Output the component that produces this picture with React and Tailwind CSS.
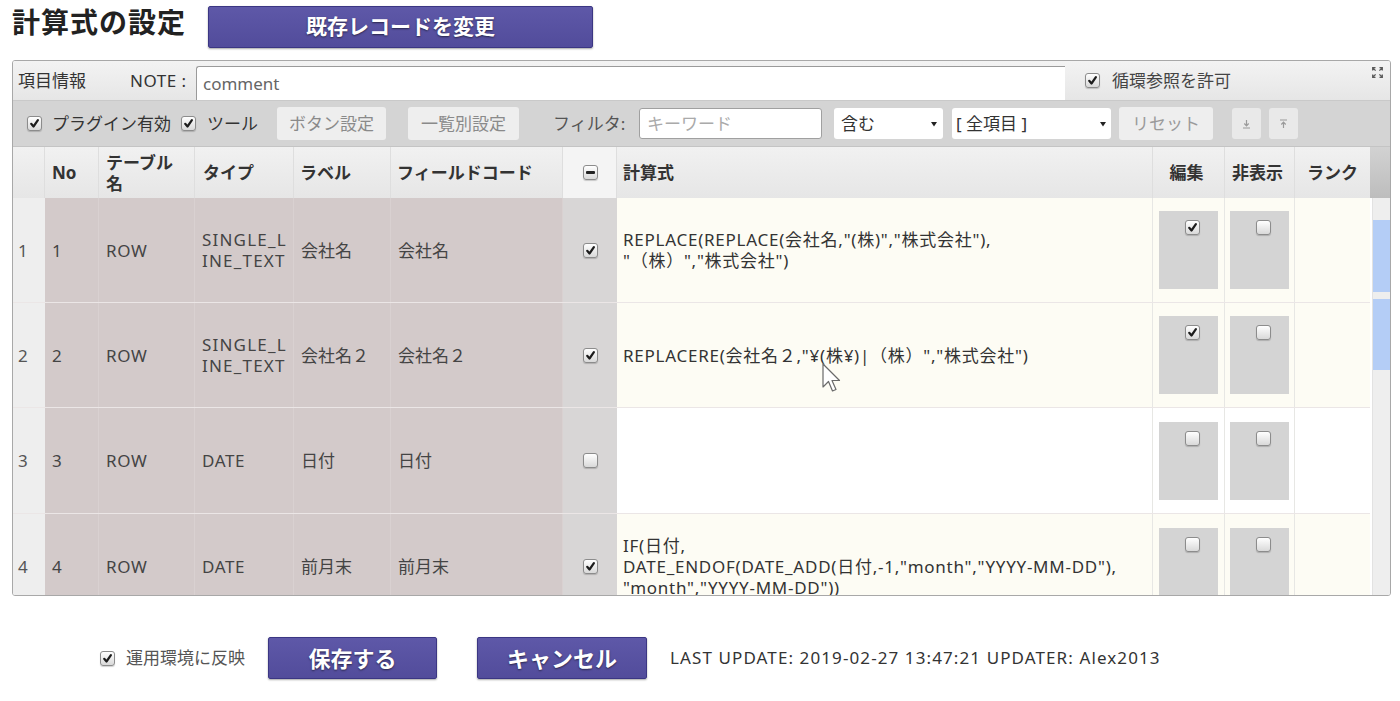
import React from "react";

const FONT = "font-['Noto_Sans','Noto_Sans_CJK_JP',sans-serif]";

function Box({ checked, minus }) {
  return (
    <span className="inline-flex w-[15px] h-[15px] shrink-0 items-center justify-center rounded-[3px] border border-[#8c8c8c] bg-linear-to-b from-white to-[#d9d9d9] shadow-[0_1px_1px_rgba(0,0,0,0.18)]">
      {checked && (
        <svg width="11" height="11" viewBox="0 0 11 11">
          <path d="M2.2 5.8 L4.5 8.5 L8.9 2.2" fill="none" stroke="#1c1c1c" strokeWidth="2.2" strokeLinecap="round" strokeLinejoin="round" />
        </svg>
      )}
      {minus && <span className="block w-[9px] h-[3px] rounded-[1px] bg-[#222]" />}
    </span>
  );
}

function PurpleButton({ children, className }) {
  return (
    <div
      className={
        "flex items-center justify-center h-[42px] rounded-[2px] border border-[#3b3683] bg-linear-to-b from-[#5e58a8] to-[#524c9b] text-white font-bold [text-shadow:0_1px_2px_rgba(0,0,0,0.55)] shadow-[0_1px_2px_rgba(0,0,0,0.35)] " +
        className
      }
    >
      {children}
    </div>
  );
}

function ToolButton({ children, className }) {
  return (
    <div className={"flex items-center justify-center h-[33px] rounded-[3px] bg-[#eeeeee] text-[#8a8a8a] text-[17px] " + className}>
      {children}
    </div>
  );
}

function Caret() {
  return (
    <svg width="6" height="6" viewBox="0 0 6 6">
      <path d="M0 1 L6 1 L3 5.5 Z" fill="#222" />
    </svg>
  );
}

function ExpandIcon() {
  return (
    <svg width="11" height="11" viewBox="0 0 11 11" fill="none" stroke="#5a5a5a" strokeWidth="1.3">
      <path d="M0.7 3.5 V0.7 H3.5 M0.7 0.7 L3.6 3.6" />
      <path d="M7.5 0.7 H10.3 V3.5 M10.3 0.7 L7.4 3.6" />
      <path d="M0.7 7.5 V10.3 H3.5 M0.7 10.3 L3.6 7.4" />
      <path d="M10.3 7.5 V10.3 H7.5 M10.3 10.3 L7.4 7.4" />
    </svg>
  );
}

function ToBottomIcon() {
  return (
    <svg width="9" height="10" viewBox="0 0 9 10" fill="none" stroke="#9a9a9a" strokeWidth="1.2">
      <path d="M4.5 1 V6.5 M2.3 4.5 L4.5 6.8 L6.7 4.5 M1 9 H8" />
    </svg>
  );
}

function ToTopIcon() {
  return (
    <svg width="9" height="10" viewBox="0 0 9 10" fill="none" stroke="#9a9a9a" strokeWidth="1.2">
      <path d="M1 1 H8 M4.5 9 V3.5 M2.3 5.5 L4.5 3.2 L6.7 5.5" />
    </svg>
  );
}

const GRID =
  "grid grid-cols-[32px_54px_96px_99px_97px_172px_54px_536px_72px_70px_75px]";

const rows = [
  {
    n: 1,
    table: "ROW",
    type: ["SINGLE_L", "INE_TEXT"],
    label: "会社名",
    code: "会社名",
    calc: true,
    formula: ['REPLACE(REPLACE(会社名,"(株)","株式会社"),', '"（株）","株式会社")'],
    edit: true,
    hide: false,
    cream: true,
    h: "h-[105px]",
  },
  {
    n: 2,
    table: "ROW",
    type: ["SINGLE_L", "INE_TEXT"],
    label: "会社名２",
    code: "会社名２",
    calc: true,
    formula: ['REPLACERE(会社名２,"¥(株¥)|（株）","株式会社")'],
    edit: true,
    hide: false,
    cream: true,
    h: "h-[105px]",
  },
  {
    n: 3,
    table: "ROW",
    type: ["DATE"],
    label: "日付",
    code: "日付",
    calc: false,
    formula: [],
    edit: false,
    hide: false,
    cream: false,
    h: "h-[106px]",
  },
  {
    n: 4,
    table: "ROW",
    type: ["DATE"],
    label: "前月末",
    code: "前月末",
    calc: true,
    formula: [
      "IF(日付,",
      'DATE_ENDOF(DATE_ADD(日付,-1,"month","YYYY-MM-DD"),',
      '"month","YYYY-MM-DD"))',
    ],
    edit: false,
    hide: false,
    cream: true,
    h: "h-[106px]",
  },
];

function BrownCell({ children, className = "" }) {
  return (
    <div className={"flex items-center bg-[#d3caca] border-r border-[#d9d1d1] pl-[7px] text-[#444] " + className}>
      {children}
    </div>
  );
}

function FlagCell({ checked, bg }) {
  return (
    <div className={"flex justify-center items-center border-r border-[#e7e7e4] " + bg}>
      <div className="w-[59px] h-[78px] bg-[#d4d4d4] flex justify-center pl-[8px] pt-[9px]">
        <Box checked={checked} />
      </div>
    </div>
  );
}

function Row({ r }) {
  const bg = r.cream ? "bg-[#fdfcf4]" : "bg-white";
  return (
    <div className={GRID + " " + r.h + " border-b border-[#ebe6e6] text-[17px] leading-[21px] tracking-[0.6px]"}>
      <div className="flex items-center pl-[5px] bg-[#eeeeee] text-[#555] tracking-normal">{r.n}</div>
      <BrownCell>{r.n}</BrownCell>
      <BrownCell>{r.table}</BrownCell>
      <BrownCell className={r.type.length > 1 ? "tracking-[1.2px]" : ""}>
        <div>
          {r.type.map((t) => (
            <div key={t}>{t}</div>
          ))}
        </div>
      </BrownCell>
      <BrownCell className="pl-[6px] tracking-normal">{r.label}</BrownCell>
      <BrownCell className="pl-[6px] tracking-normal">{r.code}</BrownCell>
      <div className="flex items-center justify-center pl-[1px] bg-[#d8d6d6]">
        <Box checked={r.calc} />
      </div>
      <div className={"flex items-center pl-[6px] text-[#333] border-r border-[#e7e7e4] tracking-[0.75px] " + bg}>
        <div>
          {r.formula.map((f, i) => (
            <div key={i} className="whitespace-nowrap">{f}</div>
          ))}
        </div>
      </div>
      <FlagCell checked={r.edit} bg={bg} />
      <FlagCell checked={r.hide} bg={bg} />
      <div className={bg} />
    </div>
  );
}

export default function App() {
  return (
    <div className={"relative w-[1400px] h-[701px] overflow-hidden bg-white " + FONT}>
      {/* title bar */}
      <div className="flex items-start h-[60px]">
        <div className="w-[208px] pl-[12px] pt-[4px] text-[28px] leading-[36px] font-bold tracking-[1px] text-[#222] whitespace-nowrap">
          計算式の設定
        </div>
        <PurpleButton className="mt-[6px] w-[385px] text-[21px]">既存レコードを変更</PurpleButton>
      </div>

      {/* main panel */}
      <div className="ml-[12px] w-[1379px] border border-[#a8a8a8] rounded-[3px] overflow-hidden">
        {/* info row */}
        <div className="flex h-[39px] bg-linear-to-b from-[#f3f3f3] to-[#e6e6e6] text-[17px] text-[#333]">
          <div className="w-[117px] pl-[5px] flex items-center">項目情報</div>
          <div className="w-[66px] flex items-center whitespace-nowrap tracking-[0.5px]">NOTE :</div>
          <div className="self-end h-[34px] w-[869px] bg-white border-t border-l border-[#9a9a9a] rounded-tl-[3px] flex items-center pl-[6px] text-[#666]">
            comment
          </div>
          <div className="flex items-center ml-[20px]">
            <Box checked />
            <span className="ml-[12px] text-[#444]">循環参照を許可</span>
          </div>
          <div className="ml-auto mr-[7px] mt-[6px]">
            <ExpandIcon />
          </div>
        </div>

        {/* toolbar row */}
        <div className="flex items-center h-[46px] bg-[#d4d4d4] pl-[14px] text-[17px] text-[#333] border-t border-[#c9c9c9]">
          <Box checked />
          <span className="w-[139px] pl-[10px] whitespace-nowrap">プラグイン有効</span>
          <Box checked />
          <span className="w-[81px] pl-[11px] whitespace-nowrap">ツール</span>
          <ToolButton className="w-[109px]">ボタン設定</ToolButton>
          <ToolButton className="ml-[22px] w-[111px]">一覧別設定</ToolButton>
          <span className="w-[120px] pl-[34px] text-[#555] whitespace-nowrap">フィルタ:</span>
          <div className="w-[183px] h-[31px] bg-white border border-[#a0a0a0] rounded-[3px] flex items-center pl-[7px] text-[#aaa]">
            キーワード
          </div>
          <div className="ml-[12px] w-[109px] h-[31px] bg-white rounded-[3px] flex items-center justify-between pl-[7px] pr-[6px] text-[#333]">
            <span>含む</span>
            <Caret />
          </div>
          <div className="ml-[9px] w-[159px] h-[31px] bg-white rounded-[3px] flex items-center justify-between pl-[4px] pr-[5px] text-[#333]">
            <span>[ 全項目 ]</span>
            <Caret />
          </div>
          <ToolButton className="ml-[8px] w-[94px] text-[#9a9a9a]">リセット</ToolButton>
          <div className="ml-[19px] w-[29px] h-[31px] rounded-[3px] bg-[#e9e9e9] flex items-center justify-center">
            <ToBottomIcon />
          </div>
          <div className="ml-[8px] w-[29px] h-[31px] rounded-[3px] bg-[#e9e9e9] flex items-center justify-center">
            <ToTopIcon />
          </div>
        </div>

        {/* table header */}
        <div className="flex h-[52px] border-t border-[#c4c4c4]">
          <div className={GRID + " bg-linear-to-b from-[#f1f1f1] to-[#e6e6e6] text-[17px] leading-[21px] font-bold text-[#333]"}>
            <div className="border-r border-[#dedede]" />
            <div className="flex items-center pl-[7px] border-r border-[#dedede]">No</div>
            <div className="flex items-center pl-[7px] border-r border-[#dedede]">
              <div>
                <div>テーブル</div>
                <div>名</div>
              </div>
            </div>
            <div className="flex items-center pl-[8px] border-r border-[#dedede]">タイプ</div>
            <div className="flex items-center pl-[6px] border-r border-[#dedede]">ラベル</div>
            <div className="flex items-center pl-[6px] border-r border-[#dedede]">フィールドコード</div>
            <div className="flex items-center justify-center pl-[1px] border-r border-[#dedede] bg-[#f4f4f4]">
              <Box minus />
            </div>
            <div className="flex items-center pl-[6px] border-r border-[#dedede]">計算式</div>
            <div className="flex items-center justify-center pr-[4px] border-r border-[#dedede]">編集</div>
            <div className="flex items-center justify-center pr-[4px] border-r border-[#dedede]">非表示</div>
            <div className="flex items-center justify-center">ランク</div>
          </div>
          <div className="w-[20px] bg-linear-to-b from-[#d2d2d2] to-[#bdbdbd]" />
        </div>

        {/* table body */}
        <div className="flex h-[397px] overflow-hidden">
          <div className="w-[1357px]">
            {rows.map((r) => (
              <Row key={r.n} r={r} />
            ))}
          </div>
          <div className="w-[2px] bg-white" />
          <div className="w-[18px] bg-[#eeeeee] border-l border-[#e2e2e2]">
            <div className="mt-[22px] h-[72px] bg-[#b4cdf6]" />
            <div className="mt-[7px] h-[71px] bg-[#b4cdf6]" />
          </div>
        </div>
      </div>

      {/* footer */}
      <div className="flex items-center h-[42px] mt-[41px] pl-[100px]">
        <Box checked />
        <span className="w-[153px] pl-[11px] text-[17px] text-[#555] whitespace-nowrap">運用環境に反映</span>
        <PurpleButton className="w-[169px] text-[22px]">保存する</PurpleButton>
        <PurpleButton className="ml-[40px] w-[170px] text-[22px]">キャンセル</PurpleButton>
        <span className="ml-[23px] text-[17px] text-[#333] whitespace-nowrap tracking-[1.1px]">
          LAST UPDATE: 2019-02-27 13:47:21 UPDATER: Alex2013
        </span>
      </div>

      {/* mouse pointer */}
      <svg className="absolute left-[822px] top-[363px]" width="22" height="32" viewBox="0 0 22 32">
        <path
          d="M1 1 L1 24 L6.5 18.5 L10.5 28 L14 26.5 L10 17.5 L17.5 17.5 Z"
          fill="#ffffff"
          stroke="#6a6a6a"
          strokeWidth="1.2"
          strokeLinejoin="round"
        />
      </svg>
    </div>
  );
}
